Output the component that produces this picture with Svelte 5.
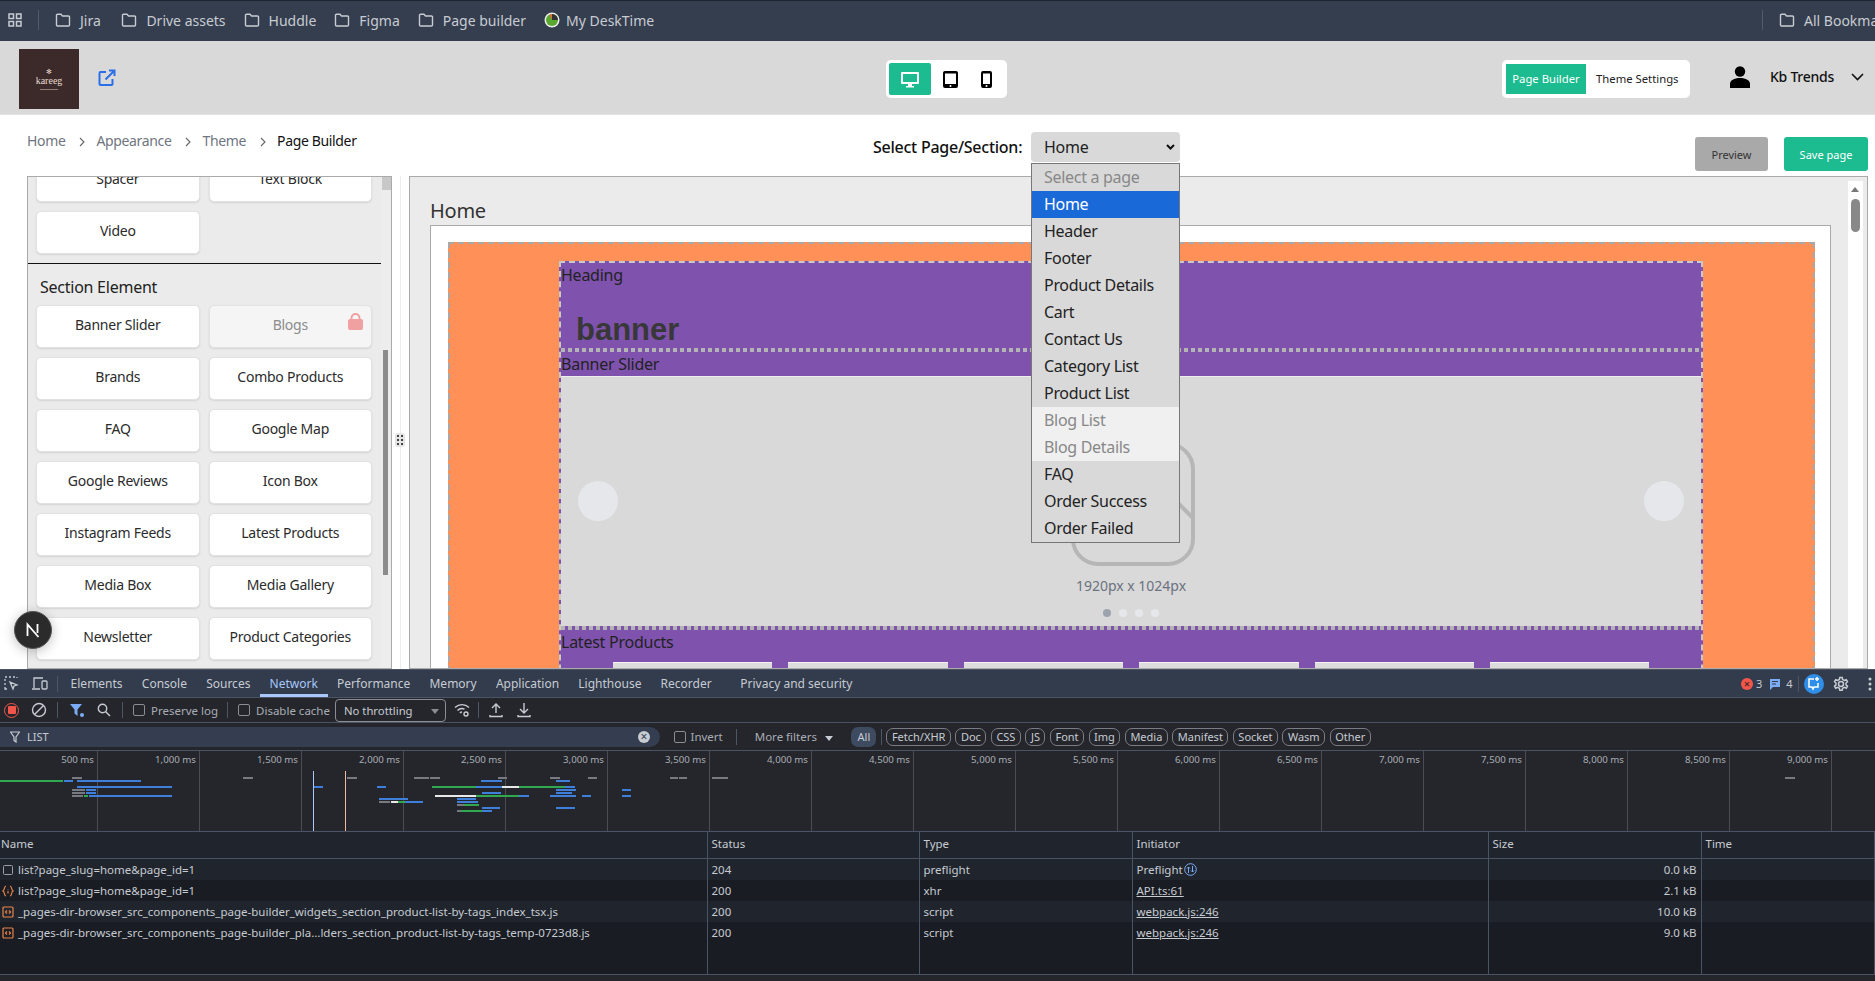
<script>
	const bookmarks = ['Jira', 'Drive assets', 'Huddle', 'Figma', 'Page builder'];
	const topElements = [{ name: 'Spacer' }, { name: 'Text Block' }, { name: 'Video' }];
	const sectionElements = [
		{ name: 'Banner Slider' },
		{ name: 'Blogs', locked: true },
		{ name: 'Brands' },
		{ name: 'Combo Products' },
		{ name: 'FAQ' },
		{ name: 'Google Map' },
		{ name: 'Google Reviews' },
		{ name: 'Icon Box' },
		{ name: 'Instagram Feeds' },
		{ name: 'Latest Products' },
		{ name: 'Media Box' },
		{ name: 'Media Gallery' },
		{ name: 'Newsletter' },
		{ name: 'Product Categories' }
	];
	const pages = [
		{ name: 'Select a page', state: 'placeholder' },
		{ name: 'Home', state: 'active' },
		{ name: 'Header' },
		{ name: 'Footer' },
		{ name: 'Product Details' },
		{ name: 'Cart' },
		{ name: 'Contact Us' },
		{ name: 'Category List' },
		{ name: 'Product List' },
		{ name: 'Blog List', state: 'locked' },
		{ name: 'Blog Details', state: 'locked' },
		{ name: 'FAQ' },
		{ name: 'Order Success' },
		{ name: 'Order Failed' }
	];
	const tabs = ['Elements', 'Console', 'Sources', 'Network', 'Performance', 'Memory', 'Application', 'Lighthouse', 'Recorder', 'Privacy and security'];
	const chips = ['Fetch/XHR', 'Doc', 'CSS', 'JS', 'Font', 'Img', 'Media', 'Manifest', 'Socket', 'Wasm', 'Other'];
	const ticks = ['500', '1,000', '1,500', '2,000', '2,500', '3,000', '3,500', '4,000', '4,500', '5,000', '5,500', '6,000', '6,500', '7,000', '7,500', '8,000', '8,500', '9,000'];
	const g = '#777a80', b = '#3f7fdc', v = '#2fa84f', w = '#e8e8e8';
	const bars = [
		[72, 82, 777, g], [243, 253, 777, g], [347, 357, 777, g], [414, 429, 777, g], [430, 440, 777, g], [498, 507, 777, g], [550, 560, 777, g], [588, 597, 777, g], [670, 678, 777, g], [679, 687, 777, g], [712, 720, 777, g], [720, 728, 777, g], [1785, 1795, 777, g],
		[0, 63, 780, v], [64, 73, 780, b], [77, 141, 780, b], [481, 502, 780, b], [556, 570, 780, b],
		[77, 172, 786, b], [314, 323, 786, b], [377, 386, 786, b], [432, 476, 786, v], [476, 502, 786, b], [502, 519, 786, w], [519, 565, 786, v], [565, 575, 786, b],
		[72, 85, 789, g], [86, 96, 789, b], [556, 576, 789, b], [622, 631, 789, b],
		[72, 85, 792, g], [86, 96, 792, b], [482, 501, 792, b], [556, 572, 792, b],
		[72, 83, 795, g], [84, 88, 795, v], [89, 172, 795, b], [435, 476, 795, w], [476, 519, 795, v], [519, 529, 795, b], [550, 576, 795, b], [582, 591, 795, b], [622, 631, 795, b],
		[379, 408, 798, b], [457, 476, 798, b],
		[379, 390, 801, g], [391, 398, 801, w], [398, 405, 801, v], [405, 423, 801, b], [457, 478, 801, b],
		[457, 464, 804, g], [464, 479, 804, v],
		[482, 500, 807, b], [556, 575, 807, b],
		[457, 461, 810, g], [461, 482, 810, v], [482, 492, 810, b]
	];
	const rows = [
		{ name: 'list?page_slug=home&page_id=1', icon: 'box', status: '204', type: 'preflight', init: 'Preflight', size: '0.0 kB' },
		{ name: 'list?page_slug=home&page_id=1', icon: 'xhr', status: '200', type: 'xhr', init: 'API.ts:61', link: true, size: '2.1 kB' },
		{ name: '_pages-dir-browser_src_components_page-builder_widgets_section_product-list-by-tags_index_tsx.js', icon: 'js', status: '200', type: 'script', init: 'webpack.js:246', link: true, size: '10.0 kB' },
		{ name: '_pages-dir-browser_src_components_page-builder_pla…lders_section_product-list-by-tags_temp-0723d8.js', icon: 'js', status: '200', type: 'script', init: 'webpack.js:246', link: true, size: '9.0 kB' }
	];
	const cards = [0, 1, 2, 3, 4, 5];
</script>

{#snippet folder()}
	<svg width="16" height="14" viewBox="0 0 16 14" fill="none" stroke="#c7cbd2" stroke-width="1.4"><path d="M1.5 3V12a1 1 0 0 0 1 1h11a1 1 0 0 0 1-1V4a1 1 0 0 0-1-1H7.5L6 1.2H2.5a1 1 0 0 0-1 1z" /></svg>
{/snippet}

{#snippet chevron()}
	<svg class="crumb-sep" width="6" height="10" viewBox="0 0 6 10" fill="none" stroke="#666" stroke-width="1.1"><path d="M1 1l4 4-4 4" /></svg>
{/snippet}

<div class="page">
	<nav class="bookmarks">
		<svg width="14" height="14" viewBox="0 0 14 14" fill="none" stroke="#c7cbd2" stroke-width="1.5"><rect x="1" y="1" width="4.5" height="4.5" /><rect x="8.5" y="1" width="4.5" height="4.5" /><rect x="1" y="8.5" width="4.5" height="4.5" /><rect x="8.5" y="8.5" width="4.5" height="4.5" /></svg>
		<span class="bm-divider"></span>
		{#each bookmarks as bookmark}
			<span class="bookmark">{@render folder()}{bookmark}</span>
		{/each}
		<span class="bookmark desk">
			<svg width="16" height="16" viewBox="0 0 16 16"><circle cx="8" cy="8" r="7.5" fill="#eee" /><circle cx="8" cy="8" r="6" fill="#58a72e" /><path d="M8 2a6 6 0 0 1 6 6H8z" fill="#333" /><path d="M8 2v6L5.5 2.6z" fill="#e8663c" /></svg>
			My DeskTime
		</span>
		<span class="bm-right">
			<span class="bm-divider"></span>
			<span class="bookmark">{@render folder()}All Bookmarks</span>
		</span>
	</nav>

	<header class="topbar">
		<div class="logo"><span class="logo-mark">✻</span><span>kareeg</span><span class="logo-line"></span></div>
		<svg class="open" width="18" height="18" viewBox="0 0 18 18" fill="none" stroke="#2b6fe8" stroke-width="2"><path d="M8 3H2.5a1 1 0 0 0-1 1v11a1 1 0 0 0 1 1h11a1 1 0 0 0 1-1v-5M11 1.5h5.5V7M16.5 1.5L7.5 10.5" /></svg>
		<div class="devices">
			<span class="device on">
				<svg width="18" height="17" viewBox="0 0 18 17" fill="#fff"><path d="M1 1h16a1 1 0 0 1 1 1v10a1 1 0 0 1-1 1H1a1 1 0 0 1-1-1V2a1 1 0 0 1 1-1zm1 2v8h14V3z" /><rect x="7" y="13" width="4" height="2" /><rect x="5" y="15" width="8" height="1.5" /></svg>
			</span>
			<span class="device">
				<svg width="15" height="17" viewBox="0 0 15 17"><path d="M2 0h11a2 2 0 0 1 2 2v13a2 2 0 0 1-2 2H2a2 2 0 0 1-2-2V2a2 2 0 0 1 2-2zm0 2.5v10.5h11V2.5z" /><circle cx="7.5" cy="15" r="1" fill="#fff" /></svg>
			</span>
			<span class="device phone">
				<svg width="11" height="17" viewBox="0 0 11 17"><path d="M2 0h7a2 2 0 0 1 2 2v13a2 2 0 0 1-2 2H2a2 2 0 0 1-2-2V2a2 2 0 0 1 2-2zm0 2.5v10.5h7V2.5z" /><circle cx="5.5" cy="15" r="1" fill="#fff" /></svg>
			</span>
		</div>
		<div class="modes">
			<span class="mode on">Page Builder</span>
			<span class="mode">Theme Settings</span>
		</div>
		<svg class="avatar" width="22" height="22" viewBox="0 0 22 22"><circle cx="11" cy="5.5" r="5.2" /><path d="M1 22v-4c0-3.5 4-6 10-6s10 2.5 10 6v4z" /></svg>
		<span class="user">Kb Trends</span>
		<svg class="user-caret" width="13" height="8" viewBox="0 0 13 8" fill="none" stroke="#111" stroke-width="1.6"><path d="M1 1l5.5 5.5L12 1" /></svg>
	</header>

	<div class="subbar">
		<div class="crumbs">
			<span>Home</span>{@render chevron()}<span>Appearance</span>{@render chevron()}<span>Theme</span>{@render chevron()}<b>Page Builder</b>
		</div>
		<span class="page-select">Select Page/Section:</span>
		<div class="select-box">
			Home
			<svg width="9" height="6" viewBox="0 0 9 6" fill="none" stroke="#111" stroke-width="2"><path d="M1 1l3.5 3.5L8 1" /></svg>
		</div>
		<div class="actions">
			<span class="btn preview">Preview</span>
			<span class="btn save">Save page</span>
		</div>
	</div>

	<main class="builder">
		<aside class="palette">
			<div class="palette-scroll">
				<div class="grid top">
					{#each topElements as el}
						<div class="tile">{el.name}</div>
					{/each}
				</div>
				<hr />
				<h3>Section Element</h3>
				<div class="grid">
					{#each sectionElements as el}
						<div class="tile" class:locked={el.locked}>
							{el.name}
							{#if el.locked}
								<svg class="lock" width="15" height="17" viewBox="0 0 15 17"><path d="M3.5 7V5a4 4 0 0 1 8 0v2" fill="none" stroke="#f0a0a0" stroke-width="2" /><rect y="6" width="15" height="11" rx="2" fill="#f0a0a0" /></svg>
							{/if}
						</div>
					{/each}
				</div>
			</div>
			<div class="sb-track"></div>
			<div class="sb-cap"></div>
			<div class="sb-thumb"></div>
		</aside>

		<div class="resizer">
			<span class="handle"><svg width="6" height="10" viewBox="0 0 6 10" fill="#444"><rect width="2" height="2" /><rect x="4" width="2" height="2" /><rect y="4" width="2" height="2" /><rect x="4" y="4" width="2" height="2" /><rect y="8" width="2" height="2" /><rect x="4" y="8" width="2" height="2" /></svg></span>
		</div>

		<section class="canvas-panel">
			<h2>Home</h2>
			<div class="canvas">
				<div class="orange">
					<div class="purple">
						<div class="label first">Heading</div>
						<div class="banner">banner</div>
						<div class="dashes"></div>
						<div class="label">Banner Slider</div>
						<div class="slider">
							<span class="arrow left"></span>
							<span class="arrow right"></span>
							<svg class="ph" width="124" height="124" viewBox="0 0 124 124" fill="none" stroke="#b6b6b6" stroke-width="4"><rect x="2" y="2" width="120" height="120" rx="25" /><path d="M90 44L122 76" /></svg>
							<span class="size">1920px x 1024px</span>
							<span class="dots"><i class="first"></i><i></i><i></i><i></i></span>
						</div>
						<div class="dashes"></div>
						<div class="label">Latest Products</div>
						<div class="cards">
							{#each cards as card (card)}
								<div class="card"></div>
							{/each}
						</div>
					</div>
				</div>
			</div>
			<div class="v-scroll"><span class="up"></span><span class="thumb"></span></div>
		</section>

		<ul class="dropdown">
			{#each pages as option}
				<li class={option.state}>{option.name}</li>
			{/each}
		</ul>

		<span class="next-badge">
			<svg width="16" height="16" viewBox="0 0 16 16" fill="none" stroke="#fff" stroke-width="1.8"><path d="M2.5 14V2.5L13.5 15" /><path d="M12.5 2v9" /></svg>
		</span>
	</main>

	<section class="devtools">
		<div class="dt-tabs">
			<svg width="15" height="15" viewBox="0 0 15 15" fill="none" stroke="#c7cbd2" stroke-width="1.3"><path d="M1 1h2M5 1h2M9 1h2M13 1v1M1 3v2M1 7v2M1 11v2h2M6 6l7 3-3 1-1 3z" /></svg>
			<svg class="dev" width="17" height="15" viewBox="0 0 17 15" fill="none" stroke="#c7cbd2" stroke-width="1.3"><path d="M3 12V2h9M1 13h8" /><rect x="11" y="5" width="5" height="8" rx="1" /></svg>
			<span class="tabs-div"></span>
			{#each tabs as tab}
				<span class="dt-tab" class:sel={tab === 'Network'} class:gap={tab === 'Privacy and security'}>{tab}</span>
			{/each}
			<div class="dt-status">
				<span class="err">×</span><span>3</span>
				<svg class="msg" width="12" height="12" viewBox="0 0 12 12"><path d="M1 1h10v8H4l-3 3z" fill="#7cacf8" /><path d="M3 3.5h6M3 6h4" stroke="#323c4d" /></svg><span>4</span>
				<span class="status-div"></span>
				<span class="ai"><svg width="13" height="14" viewBox="0 0 13 14" fill="none" stroke="#fff" stroke-width="1.5"><path d="M7 2H2v8h3l1 2 1-2h4V6" /><path d="M10 0v4M8 2h4" /></svg></span>
				<svg class="gear" width="16" height="16" viewBox="0 0 16 16" fill="none" stroke="#c7cbd2" stroke-width="1.5"><circle cx="8" cy="8" r="2.5" /><path d="M6.8 1.5h2.4l.4 2 1.8.9 1.900-.8 1.200 2.100-1.500 1.300v1.800l1.500 1.300-1.200 2.100-1.900-.8-1.800.9-.4 2H6.800l-.4-2-1.800-.9-1.900.8-1.200-2.100 1.500-1.300V7l-1.500-1.300 1.200-2.100 1.900.8 1.800-.9z" /></svg>
				<svg width="4" height="14" viewBox="0 0 4 14" fill="#c7cbd2"><circle cx="2" cy="2" r="1.5" /><circle cx="2" cy="7" r="1.5" /><circle cx="2" cy="12" r="1.5" /></svg>
			</div>
		</div>

		<div class="dt-tools">
			<span class="rec"><i></i></span>
			<svg class="m12" width="16" height="16" viewBox="0 0 16 16" fill="none" stroke="#c7cbd2" stroke-width="1.4"><circle cx="8" cy="8" r="6.5" /><path d="M3.5 12.5l9-9" /></svg>
			<span class="tool-div m10"></span>
			<svg class="m12" width="14" height="14" viewBox="0 0 14 14"><path d="M0 1h12L7.5 6.5V13L4.5 10.5V6.500z" fill="#7cacf8" /><circle cx="12" cy="12" r="2" fill="#7cacf8" /></svg>
			<svg class="m13" width="14" height="14" viewBox="0 0 14 14" fill="none" stroke="#c7cbd2" stroke-width="1.4"><circle cx="5.5" cy="5.5" r="4.2" /><path d="M8.5 8.5L13 13" /></svg>
			<span class="tool-div m11"></span>
			<span class="check m10"></span><span class="t m6">Preserve log</span>
			<span class="tool-div m9"></span>
			<span class="check m10"></span><span class="t m6">Disable cache</span>
			<span class="throttle">No throttling<i class="tri"></i></span>
			<svg class="m8" width="16" height="16" viewBox="0 0 16 16" fill="none" stroke="#c7cbd2" stroke-width="1.4"><path d="M1 5.5a10 10 0 0 1 14 0M3.5 8.500a6.500 6.500 0 0 1 7-1.500M6 11a2.500 2.500 0 0 1 2-1" /><circle cx="12" cy="12" r="2" /></svg>
			<span class="tool-div m8"></span>
			<svg class="m10" width="14" height="16" viewBox="0 0 14 16" fill="none" stroke="#c7cbd2" stroke-width="1.4"><path d="M7 11V2M3 6l4-4 4 4M1 13v1.500h12V13" /></svg>
			<svg class="m14" width="14" height="16" viewBox="0 0 14 16" fill="none" stroke="#c7cbd2" stroke-width="1.4"><path d="M7 1v10M3 7l4 4 4-4M1 13v1.500h12V13" /></svg>
		</div>

		<div class="dt-filter">
			<div class="search">
				<svg width="10" height="12" viewBox="0 0 10 12" fill="none" stroke="#c7cbd2" stroke-width="1.2"><path d="M.5 1h9L6 6v5L4 9.500V6z" /></svg>
				<span>LIST</span>
				<span class="clear">×</span>
			</div>
			<span class="check"></span><span class="t">Invert</span>
			<span class="tool-div m9"></span>
			<span class="t more">More filters<i class="tri light"></i></span>
			<span class="all">All</span>
			<span class="tool-div"></span>
			{#each chips as chip}
				<span class="chip">{chip}</span>
			{/each}
		</div>

		<div class="overview">
			{#each ticks as tick}
				<div class="tick"><span>{tick} ms</span></div>
			{/each}
			{#each bars as bar}
				<i class="bar" style="left:{bar[0]}px;width:{bar[1] - bar[0]}px;top:{bar[2] - 751}px;background:{bar[3]}"></i>
			{/each}
			<i class="mark dcl"></i>
			<i class="mark load"></i>
		</div>

		<table class="requests">
			<colgroup><col class="c1" /><col class="c2" /><col class="c3" /><col class="c4" /><col class="c5" /><col /></colgroup>
			<thead>
				<tr><th>Name</th><th>Status</th><th>Type</th><th>Initiator</th><th>Size</th><th>Time</th></tr>
			</thead>
			<tbody>
				{#each rows as row}
					<tr>
						<td class="name">
							{#if row.icon === 'box'}
								<svg width="12" height="12" viewBox="0 0 12 12" fill="none" stroke="#9a9da3"><rect x="1.5" y="1.5" width="9" height="9" rx="1" /></svg>
							{:else if row.icon === 'xhr'}
								<svg width="12" height="12" viewBox="0 0 12 12" fill="none" stroke="#e8834a" stroke-width="1.2"><path d="M4 1C2 1 3 5 1 6c2 1 1 5 3 5M8 1c2 0 1 4 3 5-2 1-1 5-3 5" /><path d="M6 4v.5M6 6v2.5" /></svg>
							{:else}
								<svg width="12" height="12" viewBox="0 0 12 12" fill="none" stroke="#e8834a" stroke-width="1.2"><rect x="1" y="1" width="10" height="10" rx="1" /><path d="M5 4.5L3.5 6 5 7.5M7 4.5L8.5 6 7 7.5" /></svg>
							{/if}
							<span>{row.name}</span>
						</td>
						<td>{row.status}</td>
						<td>{row.type}</td>
						<td>
							<span class:link={row.link}>{row.init}</span>{#if row.init === 'Preflight'}<svg class="pf" width="13" height="13" viewBox="0 0 13 13" fill="none" stroke="#7cacf8"><circle cx="6.5" cy="6.5" r="5.8" /><path d="M4.5 10V4M3 5.5l1.5-1.5L6 5.5M8.5 3v6M7 7.5L8.5 9 10 7.5" /></svg>{/if}
						</td>
						<td class="num">{row.size}</td>
						<td></td>
					</tr>
				{/each}
				<tr class="filler"><td></td><td></td><td></td><td></td><td></td><td></td></tr>
			</tbody>
		</table>
		<div class="dt-foot"></div>
	</section>
</div>

<style>
	:global(body) {
		margin: 0;
		background: #fff;
		overflow: hidden;
	}

	.page {
		height: 981px;
		overflow: hidden;
		display: flex;
		flex-direction: column;
		font-family: 'Noto Sans', sans-serif;
		letter-spacing: -0.25px;
		color: #333;
	}

	.bookmarks {
		height: 41px;
		flex: none;
		box-sizing: border-box;
		border-top: 1px solid #1f2530;
		background: #353e4f;
		display: flex;
		align-items: center;
		padding: 0 0 2px 8px;
		color: #c7cbd2;
		font-size: 14px;
		letter-spacing: 0;
		white-space: nowrap;
		overflow: hidden;
		position: relative;
	}

	.bm-divider {
		width: 1px;
		height: 20px;
		background: #525b6b;
		margin: 0 16px;
	}

	.bookmark {
		display: flex;
		align-items: center;
		gap: 9px;
		margin-right: 18px;
	}

	.bm-divider + .bookmark {
		margin-right: 20.6px;
	}

	.desk {
		gap: 6px;
	}

	.bm-right {
		position: absolute;
		left: 1746px;
		top: 0;
		height: 38px;
		display: flex;
		align-items: center;
	}

	.topbar {
		height: 74px;
		flex: none;
		background: #d9d9d9;
		display: flex;
		align-items: center;
		padding: 3px 0 0 19px;
		border-bottom: 1px solid #e4e4e4;
		box-sizing: border-box;
	}

	.logo {
		width: 60px;
		height: 60px;
		flex: none;
		background: #3b2a29;
		color: #e8dcd0;
		display: flex;
		flex-direction: column;
		align-items: center;
		justify-content: center;
		font-family: 'Liberation Serif', serif;
		font-size: 10px;
		line-height: 10px;
		letter-spacing: 0;
	}

	.logo-mark {
		font-size: 7px;
		line-height: 8px;
	}

	.logo-line {
		width: 18px;
		height: 1px;
		margin-top: 3px;
		background: #8d7d76;
	}

	.open {
		flex: none;
		margin-left: 19px;
		margin-top: -2px;
	}

	.devices {
		flex: none;
		margin-left: 770px;
		width: 121px;
		height: 38px;
		box-sizing: border-box;
		background: #fff;
		border-radius: 5px;
		padding: 3px;
		display: flex;
		align-items: center;
	}

	.device {
		width: 38px;
		height: 32px;
		flex: none;
		display: flex;
		align-items: center;
		justify-content: center;
		border-radius: 2px;
	}

	.device.on {
		width: 42px;
		background: #1dbb90;
	}

	.device.phone {
		margin-left: -2px;
	}

	.modes {
		flex: none;
		margin-left: 495px;
		width: 188px;
		height: 38px;
		box-sizing: border-box;
		background: #fff;
		border-radius: 5px;
		display: flex;
		align-items: center;
		padding-left: 4px;
		font-size: 11.3px;
		letter-spacing: 0;
		white-space: nowrap;
	}

	.mode {
		padding: 0 10px 1px;
		color: #222;
	}

	.mode.on {
		width: 80px;
		height: 30px;
		box-sizing: border-box;
		padding: 0 0 1px;
		display: flex;
		align-items: center;
		justify-content: center;
		background: #1dbb90;
		color: #fff;
	}

	.avatar {
		flex: none;
		margin-left: 39px;
		margin-top: -4px;
	}

	.user {
		width: 63px;
		flex: none;
		margin-left: 19px;
		margin-right: 18px;
		margin-top: -6px;
		font-size: 14px;
		font-weight: 500;
		color: #111;
		white-space: nowrap;
	}

	.user-caret {
		flex: none;
		margin-top: -4px;
	}

	.subbar {
		height: 61px;
		flex: none;
		position: relative;
		box-sizing: border-box;
		font-size: 14px;
	}

	.crumbs {
		position: absolute;
		left: 27px;
		top: 16px;
		display: flex;
		align-items: center;
		color: #6f7680;
		letter-spacing: -0.35px;
	}

	.crumb-sep {
		margin: 2px 11px 0 14px;
	}

	.crumbs b {
		font-weight: 400;
		color: #111;
	}

	.page-select {
		position: absolute;
		left: 873px;
		top: 21px;
		font-size: 16px;
		font-weight: 500;
		color: #111;
		white-space: nowrap;
	}

	.select-box {
		position: absolute;
		left: 1031px;
		top: 17px;
		width: 149px;
		height: 30px;
		box-sizing: border-box;
		background: #d9d9d9;
		border-radius: 4px;
		padding: 0 12px 0 13px;
		display: flex;
		align-items: center;
		justify-content: space-between;
		font-size: 16px;
		color: #222;
	}

	.select-box svg {
		margin-right: -7px;
	}

	.actions {
		position: absolute;
		left: 1695px;
		top: 22px;
		display: flex;
		gap: 16px;
	}

	.btn {
		height: 34px;
		display: flex;
		align-items: center;
		justify-content: center;
		border-radius: 3px;
		font-size: 11px;
		letter-spacing: 0;
	}

	.preview {
		width: 73px;
		background: #a9a9a9;
		color: #333;
	}

	.save {
		width: 84px;
		background: #1dbb90;
		color: #fff;
	}

	.builder {
		height: 493px;
		flex: none;
		position: relative;
		display: flex;
		padding: 0 7px 0 27px;
	}

	.palette {
		width: 365px;
		flex: none;
		position: relative;
		box-sizing: border-box;
		border: 1px solid #aaa;
		background: #ebebeb;
		overflow: hidden;
	}

	.palette-scroll {
		margin-top: -18px;
		width: 353px;
	}

	.grid {
		display: grid;
		grid-template-columns: 163.5px 163.5px;
		gap: 9px;
		padding: 0 8px;
		grid-auto-rows: 43px;
	}

	.grid.top {
		padding-bottom: 9px;
	}

	.palette hr {
		margin: 0;
		border: 0;
		border-top: 1px solid #111;
	}

	h3 {
		margin: 12px 0 7px 12px;
		font-size: 16px;
		line-height: 22px;
		font-weight: 400;
		color: #222;
	}

	.tile {
		position: relative;
		box-sizing: border-box;
		background: #fff;
		border: 1px solid #e2e2e2;
		border-radius: 5px;
		box-shadow: 0 1px 2px rgba(0, 0, 0, 0.1);
		display: flex;
		align-items: center;
		justify-content: center;
		padding-bottom: 4px;
		font-size: 14px;
		color: #2b2b2b;
	}

	.tile.locked {
		background: #f5f5f5;
		color: #8c8c8c;
	}

	.lock {
		position: absolute;
		right: 8px;
		top: 7px;
	}

	.sb-track {
		position: absolute;
		left: 353px;
		top: 0;
		bottom: 0;
		width: 10px;
		background: #ededed;
	}

	.sb-cap {
		position: absolute;
		left: 354px;
		top: 0;
		width: 9px;
		height: 13px;
		background: #c8c8c8;
	}

	.sb-thumb {
		position: absolute;
		left: 355px;
		top: 173px;
		width: 5px;
		height: 225px;
		background: #8c8c8c;
	}

	.resizer {
		width: 17px;
		flex: none;
		position: relative;
	}

	.resizer::before {
		content: '';
		position: absolute;
		left: 8px;
		top: 0;
		bottom: 0;
		width: 1px;
		background: #ececec;
	}

	.handle {
		position: absolute;
		left: 3px;
		top: 257px;
		width: 10px;
		height: 14px;
		background: #e5e5e5;
		border-radius: 3px;
		display: flex;
		align-items: center;
		justify-content: center;
	}

	.canvas-panel {
		flex: 1;
		position: relative;
		box-sizing: border-box;
		border: 1px solid #aaa;
		background: #ebebeb;
		overflow: hidden;
		padding: 22px 36px 0 20px;
	}

	h2 {
		margin: 0 0 2px;
		font-size: 20px;
		line-height: 24px;
		font-weight: 400;
		color: #333;
	}

	.canvas {
		height: 460px;
		box-sizing: border-box;
		border: 1px solid #aaa;
		background: #fff;
		padding: 16px 15px 0 17px;
	}

	.orange {
		height: 460px;
		box-sizing: border-box;
		border: 2px dashed #a8a8a8;
		background: #ff9058;
		padding: 17px 110px 0 109px;
	}

	.purple {
		height: 460px;
		box-sizing: border-box;
		border: 2px dashed #c9c9c9;
		background: #7f52ae;
	}

	.label {
		height: 24px;
		font-size: 16px;
		line-height: 24px;
		color: #222;
	}

	.label.first {
		height: 22px;
		line-height: 22px;
		margin-top: 1px;
	}

	.banner {
		font-family: 'Liberation Sans', sans-serif;
		font-size: 31px;
		font-weight: 700;
		line-height: 36px;
		letter-spacing: 0;
		color: #383838;
		padding: 26px 0 0 15px;
	}

	.dashes {
		height: 4px;
		background: repeating-linear-gradient(90deg, #b4b4b4 0 4px, transparent 4px 7px);
	}

	.slider {
		position: relative;
		height: 249px;
		border-top: 1px solid #eee;
		background: #d9d9d9;
	}

	.arrow {
		position: absolute;
		top: 104px;
		width: 40px;
		height: 40px;
		border-radius: 50%;
		background: #e5e7eb;
	}

	.arrow.left {
		left: 17px;
	}

	.arrow.right {
		right: 17px;
	}

	.ph {
		position: absolute;
		left: 510px;
		top: 65px;
	}

	.size {
		position: absolute;
		left: 0;
		right: 0;
		top: 199px;
		text-align: center;
		font-size: 14px;
		line-height: 20px;
		letter-spacing: 0;
		color: #6b7280;
	}

	.dots {
		position: absolute;
		left: 0;
		right: 0;
		top: 232px;
		display: flex;
		justify-content: center;
		gap: 8px;
	}

	.dots i {
		width: 8px;
		height: 8px;
		border-radius: 50%;
		background: #e5e7eb;
	}

	.dots i.first {
		background: #9ca3af;
	}

	.cards {
		display: grid;
		grid-template-columns: repeat(6, 159.4px);
		gap: 16px;
		padding: 8px 0 0 52px;
	}

	.card {
		height: 60px;
		border-top: 1px solid #f4f4f4;
		background: #dddddd;
	}

	.v-scroll {
		position: absolute;
		right: 4px;
		top: 4px;
		bottom: 0;
		width: 15px;
		background: #fff;
	}

	.up {
		position: absolute;
		left: 3px;
		top: 6px;
		border: 4.5px solid transparent;
		border-top: 0;
		border-bottom: 5px solid #777;
	}

	.thumb {
		position: absolute;
		left: 3px;
		top: 18px;
		width: 9px;
		height: 33px;
		border-radius: 4.5px;
		background: #888;
	}

	.dropdown {
		position: absolute;
		left: 1031px;
		top: -13px;
		width: 149px;
		margin: 0;
		padding: 0;
		box-sizing: border-box;
		list-style: none;
		border: 1px solid #777;
		background: #d9d9d9;
		font-size: 16px;
		letter-spacing: -0.3px;
		color: #222;
		z-index: 2;
	}

	.dropdown li {
		height: 27px;
		line-height: 26px;
		padding-left: 12px;
	}

	.dropdown li.placeholder {
		color: #888;
	}

	.dropdown li.active {
		background: #1a69d9;
		color: #fff;
	}

	.dropdown li.locked {
		background: #f0f0f0;
		color: #888;
	}

	.next-badge {
		position: absolute;
		left: 14px;
		top: 435px;
		width: 36px;
		height: 36px;
		border: 1px solid #555;
		border-radius: 50%;
		background: #2b2b2b;
		box-shadow: 0 2px 12px rgba(0, 0, 0, 0.25);
		display: flex;
		align-items: center;
		justify-content: center;
		z-index: 1;
	}

	.devtools {
		height: 312px;
		flex: none;
		display: flex;
		flex-direction: column;
		background: #24262c;
		color: #c7cbd2;
		font-size: 12px;
		letter-spacing: 0;
		position: relative;
		z-index: 3;
	}

	.dt-tabs {
		height: 29px;
		flex: none;
		box-sizing: border-box;
		background: #323c4d;
		border-top: 1px solid #4a5464;
		border-bottom: 1px solid #4a5464;
		display: flex;
		align-items: center;
		padding-left: 4px;
		position: relative;
	}

	.dev {
		margin-left: 12px;
	}

	.tabs-div {
		width: 1px;
		height: 16px;
		background: #4e5663;
		margin: 0 3px 0 9px;
		flex: none;
	}

	.dt-tab {
		margin: 0 9.6px;
		height: 27px;
		line-height: 27px;
		position: relative;
		white-space: nowrap;
	}

	.dt-tab.sel {
		color: #a8c7fa;
	}

	.dt-tab.sel::after {
		content: '';
		position: absolute;
		left: -10px;
		right: -10px;
		bottom: 0;
		height: 3px;
		background: #a8c7fa;
	}

	.dt-tab.gap {
		margin-left: 19px;
	}

	.dt-status {
		position: absolute;
		left: 1741px;
		top: 0;
		height: 27px;
		display: flex;
		align-items: center;
		gap: 3px;
		font-size: 11px;
	}

	.err {
		width: 12px;
		height: 12px;
		border-radius: 50%;
		background: #f2564b;
		color: #222;
		font-size: 11px;
		line-height: 11px;
		text-align: center;
	}

	.msg {
		margin-left: 4px;
		margin-right: 2px;
	}

	.status-div {
		width: 1px;
		height: 16px;
		background: #4e5663;
		margin: 0 2px;
	}

	.ai {
		width: 20px;
		height: 20px;
		border-radius: 50%;
		background: #2f8fe8;
		display: flex;
		align-items: center;
		justify-content: center;
	}

	.gear {
		margin: 0 16px 0 6px;
	}

	.dt-tools {
		height: 25px;
		flex: none;
		box-sizing: border-box;
		border-bottom: 1px solid #4a5464;
		display: flex;
		align-items: center;
		padding-left: 4px;
	}

	.dt-tools svg {
		flex: none;
	}

	.tool-div {
		width: 1px;
		height: 16px;
		background: #4e5663;
		flex: none;
	}

	.m6 { margin-left: 6px; }
	.m8 { margin-left: 8px; }
	.m9 { margin-left: 9px; }
	.m10 { margin-left: 10px; }
	.m11 { margin-left: 11px; }
	.m12 { margin-left: 12px; }
	.m13 { margin-left: 13px; }
	.m14 { margin-left: 14px; }

	.rec {
		width: 15px;
		height: 15px;
		box-sizing: border-box;
		border: 1.5px solid #f2564b;
		border-radius: 50%;
		display: flex;
		align-items: center;
		justify-content: center;
	}

	.rec i {
		width: 8px;
		height: 8px;
		background: #f2564b;
		border-radius: 1px;
	}

	.check {
		width: 12px;
		height: 12px;
		box-sizing: border-box;
		border: 1px solid #8a8d93;
		border-radius: 2px;
		flex: none;
	}

	.t {
		font-size: 11.5px;
		color: #a9adb4;
		white-space: nowrap;
	}

	.throttle {
		width: 111px;
		height: 23px;
		box-sizing: border-box;
		border: 1px solid #8a8d93;
		border-radius: 4px;
		padding-left: 8px;
		margin-left: 5px;
		display: flex;
		align-items: center;
		position: relative;
		font-size: 11.3px;
		flex: none;
	}

	.tri {
		position: absolute;
		right: 6px;
		top: 9px;
		border: 4px solid transparent;
		border-top: 5px solid #8a8d93;
	}

	.tri.light {
		position: static;
		display: inline-block;
		margin: 0 0 -4px 8px;
		border-top-color: #c7cbd2;
	}

	.dt-filter {
		height: 28px;
		flex: none;
		box-sizing: border-box;
		border-bottom: 1px solid #4a5464;
		display: flex;
		align-items: center;
		gap: 4.5px;
		white-space: nowrap;
	}

	.search {
		width: 660px;
		height: 20px;
		box-sizing: border-box;
		background: #343e50;
		border-radius: 0 10px 10px 0;
		display: flex;
		align-items: center;
		padding-left: 10px;
		gap: 7px;
		font-size: 11px;
		margin-right: 9.5px;
		position: relative;
		flex: none;
	}

	.clear {
		position: absolute;
		left: 638px;
		top: 4px;
		width: 12px;
		height: 12px;
		border-radius: 50%;
		background: #c7cbd2;
		color: #343e50;
		font-size: 12px;
		line-height: 11px;
		text-align: center;
	}

	.more {
		margin: 0 14px 0 13px;
	}

	.all {
		width: 25px;
		height: 20px;
		line-height: 20px;
		text-align: center;
		border-radius: 7px;
		background: #3d4a60;
		font-size: 11px;
	}

	.chip {
		height: 18px;
		line-height: 16px;
		box-sizing: border-box;
		border: 1px solid #7a7d83;
		border-radius: 7px;
		padding: 0 4.5px;
		font-size: 11px;
	}

	.overview {
		height: 81px;
		flex: none;
		box-sizing: border-box;
		border-bottom: 1px solid #4a5464;
		position: relative;
		display: grid;
		grid-template-columns: 98px repeat(17, 102px);
		overflow: hidden;
	}

	.tick {
		box-sizing: border-box;
		border-right: 1px solid #4a4d54;
		text-align: right;
		padding: 2px 3px 0 0;
		font-size: 9.7px;
		color: #a9adb4;
		white-space: nowrap;
	}

	.bar {
		position: absolute;
		height: 2px;
	}

	.mark {
		position: absolute;
		top: 20px;
		bottom: 0;
		width: 1px;
	}

	.dcl {
		left: 313px;
		background: #a8c7fa;
	}

	.load {
		left: 345px;
		background: #f2b8a0;
	}

	.requests {
		width: 100%;
		flex: none;
		table-layout: fixed;
		border-collapse: collapse;
		font-size: 11.5px;
		background: #191c22;
	}

	.c1 { width: 707px; }
	.c2 { width: 212px; }
	.c3 { width: 213px; }
	.c4 { width: 356px; }
	.c5 { width: 213px; }

	th {
		height: 26px;
		padding: 0 0 2px 4px;
		box-sizing: border-box;
		background: #20252d;
		border-right: 1px solid #4a5464;
		border-bottom: 1px solid #4a5464;
		text-align: left;
		font-weight: 400;
	}

	th:first-child {
		padding-left: 1px;
	}

	td {
		height: 21px;
		padding: 0 0 0 4px;
		border-right: 1px solid #4a5464;
		white-space: nowrap;
		overflow: hidden;
	}

	tbody tr:nth-child(odd) td {
		background: #20252d;
	}

	.filler td {
		height: 31px;
		background: #191c22 !important;
	}

	.name {
		padding-left: 2px;
	}

	.name svg {
		vertical-align: -2px;
		margin-right: 1px;
	}

	.link {
		text-decoration: underline;
	}

	.pf {
		vertical-align: -2px;
		margin-left: 1px;
	}

	.num {
		text-align: right;
		padding-right: 4px;
	}

	.dt-foot {
		flex: 1;
		border-top: 1px solid #4a5464;
		background: #24262c;
	}
</style>
